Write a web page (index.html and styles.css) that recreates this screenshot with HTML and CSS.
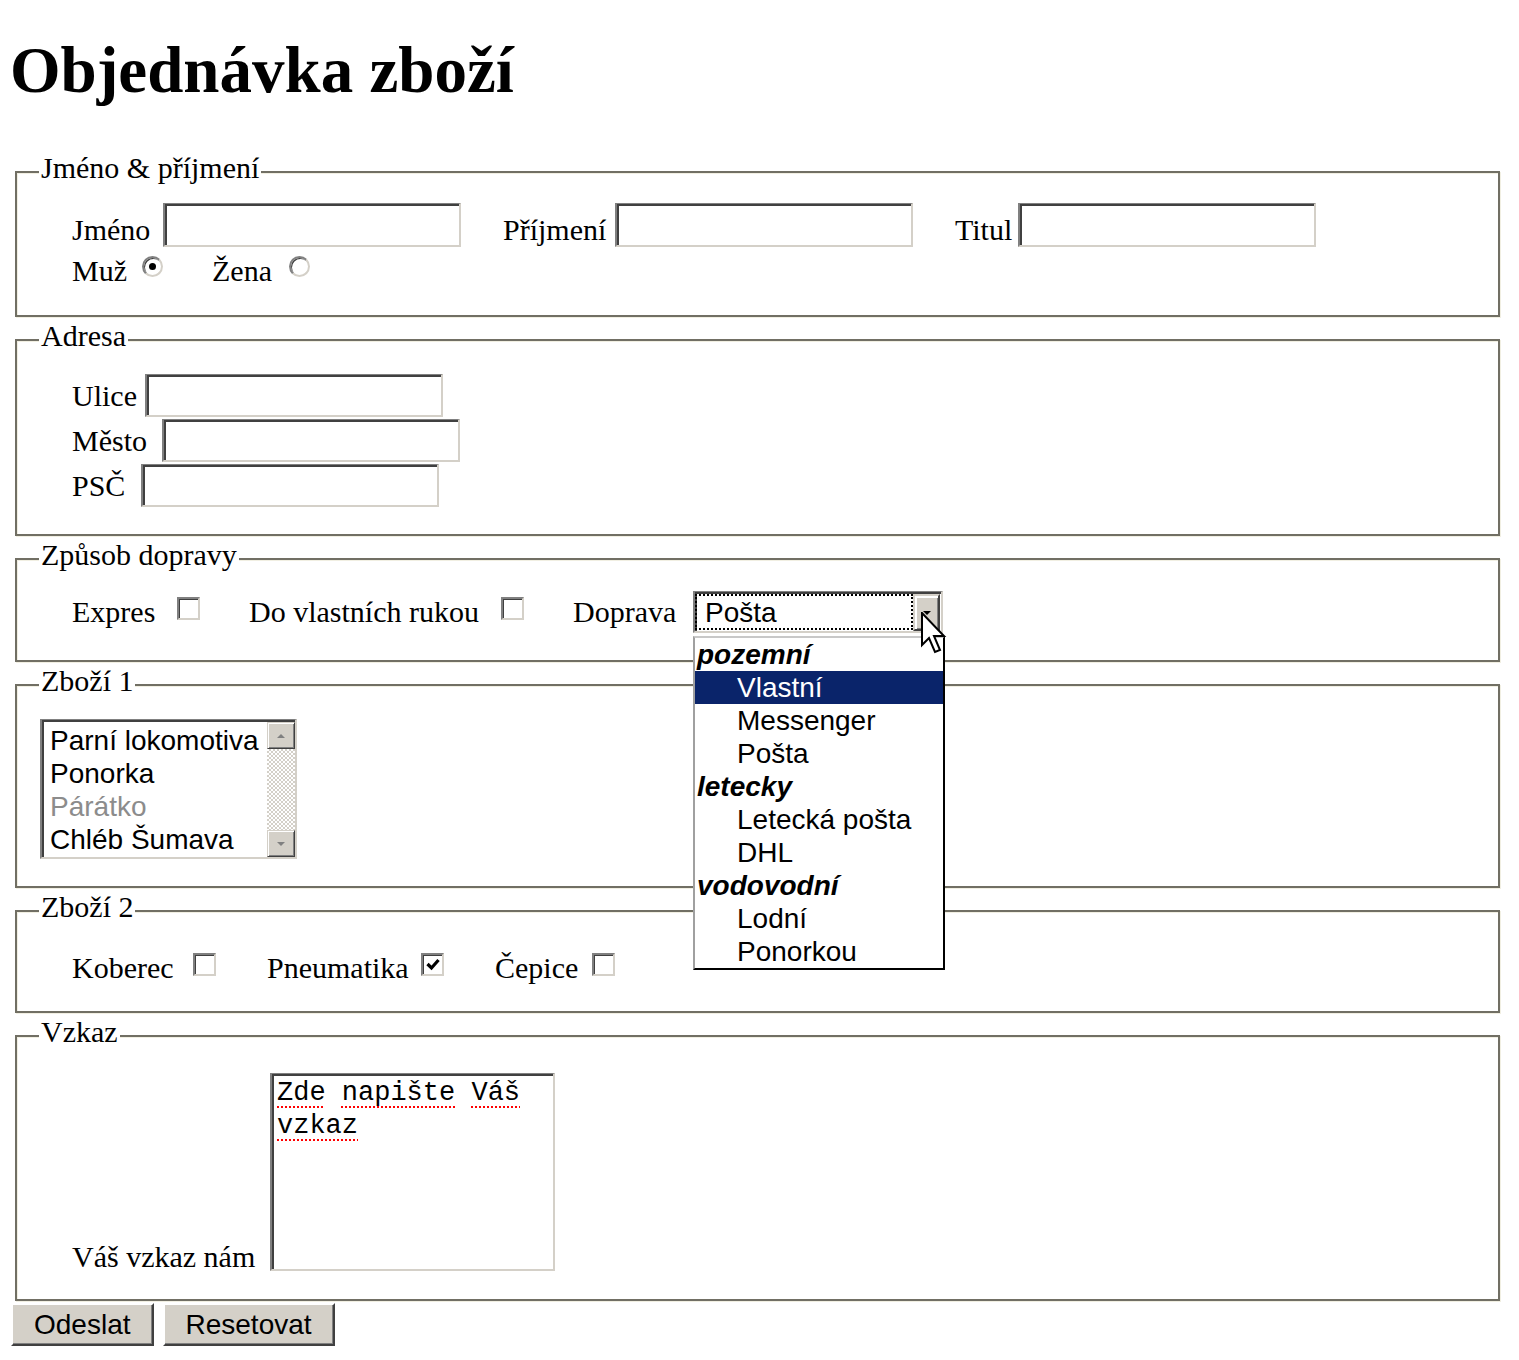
FILE: index.html
```html
<!DOCTYPE html>
<html lang="cs">
<head>
<meta charset="utf-8">
<title>Objednávka zboží</title>
<link rel="stylesheet" href="styles.css">
</head>
<body>
<h1 class="title">Objednávka zboží</h1>
<form class="order">
  <fieldset class="group group--name">
    <legend class="group__legend">Jméno &amp; příjmení</legend>
    <div class="grid grid--name">
      <label class="pair"><span class="lbl">Jméno</span><input class="text-input" type="text"></label>
      <label class="pair"><span class="lbl">Příjmení</span><input class="text-input" type="text"></label>
      <label class="pair"><span class="lbl">Titul</span><input class="text-input" type="text"></label>
    </div>
    <div class="grid grid--gender">
      <label class="pair pair--top"><span class="lbl">Muž</span><span class="radio radio--on"></span></label>
      <label class="pair pair--top"><span class="lbl">Žena</span><span class="radio"></span></label>
    </div>
  </fieldset>

  <fieldset class="group group--address">
    <legend class="group__legend">Adresa</legend>
    <label class="pair pair--addr pair--ulice"><span class="lbl lbl--lift">Ulice</span><input class="text-input text-input--short" type="text"></label>
    <label class="pair pair--addr pair--mesto"><span class="lbl lbl--lift">Město</span><input class="text-input text-input--short" type="text"></label>
    <label class="pair pair--addr pair--psc"><span class="lbl lbl--lift">PSČ</span><input class="text-input text-input--short" type="text"></label>
  </fieldset>

  <fieldset class="group group--transport">
    <legend class="group__legend">Způsob dopravy</legend>
    <div class="grid grid--transport">
      <label class="pair"><span class="lbl lbl--lift">Expres</span><span class="check check--mid"></span></label>
      <label class="pair"><span class="lbl lbl--lift">Do vlastních rukou</span><span class="check check--mid"></span></label>
      <div class="pair">
        <span class="lbl lbl--lift">Doprava</span>
        <div class="combo">
          <span class="combo__value">Pošta</span>
          <span class="combo__button">
            <svg class="combo__arrow" width="10" height="6" viewBox="0 0 10 6"><path d="M1 1h8L5 5z" fill="#000"/></svg>
          </span>
          <ul class="combo__list">
            <li class="combo__group">pozemní</li>
            <li class="combo__option is-selected">Vlastní</li>
            <li class="combo__option">Messenger</li>
            <li class="combo__option">Pošta</li>
            <li class="combo__group">letecky</li>
            <li class="combo__option">Letecká pošta</li>
            <li class="combo__option">DHL</li>
            <li class="combo__group">vodovodní</li>
            <li class="combo__option">Lodní</li>
            <li class="combo__option">Ponorkou</li>
          </ul>
          <svg class="cursor" width="26" height="44" viewBox="0 0 26 44"><path d="M1 1 L1 33 L8 26 L14 40 L19 38 L13 24 L23 24 Z" fill="#fff" stroke="#000" stroke-width="2" stroke-linejoin="miter"/></svg>
        </div>
      </div>
    </div>
  </fieldset>

  <fieldset class="group group--goods1">
    <legend class="group__legend">Zboží 1</legend>
    <div class="listbox">
      <ul class="listbox__items">
        <li>Parní lokomotiva</li>
        <li>Ponorka</li>
        <li class="is-disabled">Párátko</li>
        <li>Chléb Šumava</li>
      </ul>
      <div class="scrollbar">
        <span class="scrollbar__btn"><svg width="10" height="6" viewBox="0 0 10 6"><path d="M1 5h8L5 1z" fill="#808080"/></svg></span>
        <span class="scrollbar__track"></span>
        <span class="scrollbar__btn"><svg width="10" height="6" viewBox="0 0 10 6"><path d="M1 1h8L5 5z" fill="#808080"/></svg></span>
      </div>
    </div>
  </fieldset>

  <fieldset class="group group--goods2">
    <legend class="group__legend">Zboží 2</legend>
    <div class="grid grid--goods">
      <label class="pair pair--top"><span class="lbl">Koberec</span><span class="check check--top"></span></label>
      <label class="pair pair--top"><span class="lbl">Pneumatika</span><span class="check check--top check--on"><svg width="18" height="18" viewBox="0 0 18 18"><path d="M3.5 8 L7.5 12 L14.5 4" fill="none" stroke="#000" stroke-width="3.2"/></svg></span></label>
      <label class="pair pair--top"><span class="lbl">Čepice</span><span class="check check--top"></span></label>
    </div>
  </fieldset>

  <fieldset class="group group--message">
    <legend class="group__legend">Vzkaz</legend>
    <label class="pair pair--memo"><span class="lbl lbl--drop">Váš vzkaz nám</span><span class="memo" role="textbox" aria-multiline="true"><span class="typo">Zde</span> <span class="typo">napište</span> <span class="typo">Váš</span><br><span class="typo">vzkaz</span></span></label>
  </fieldset>

  <div class="actions">
    <button class="btn" type="submit">Odeslat</button>
    <button class="btn" type="reset">Resetovat</button>
  </div>
</form>
</body>
</html>
```

FILE: styles.css
```css
* { box-sizing: border-box; }

html, body {
  margin: 0;
  padding: 0;
  background: #fff;
}

body {
  padding: 0 12px;
  font-family: "Liberation Serif", "Times New Roman", serif;
  font-size: 30px;
  color: #000;
}

.title {
  margin: 34px 0 0 -2px;
  font: bold 65px/72px "Liberation Serif", "Times New Roman", serif;
}

.order {
  margin-top: 45px;
}

/* ---------- fieldsets ---------- */
.group {
  margin: 0 7px 2px 3px;
  padding: 0 0 27px 0;
  border: 2px solid #716f64;
  box-shadow: inset 1px 1px 0 #f1efe2, 1px 1px 0 #f1efe2;
  min-width: 0;
}

.group__legend {
  margin-left: 22px;
  padding: 0 2px 8px;
  font-size: 30px;
  line-height: 34px;
  background: #fff;
}

.group--transport { padding-bottom: 27px; }
.group--goods2 { padding-bottom: 26px; }
.group--message { padding-bottom: 28px; }

/* ---------- rows ---------- */
.grid {
  display: grid;
  margin-left: 55px;
}

.grid--name {
  margin-top: 10px;
  grid-template-columns: 389px 410px 361px;
  column-gap: 42px;
}

.grid--gender {
  margin-top: 7px;
  grid-template-columns: 91px 98px;
  column-gap: 49px;
}

.grid--transport {
  margin-top: 11px;
  grid-template-columns: 128px 275px 370px;
  column-gap: 49px;
}

.grid--goods {
  margin-top: 19px;
  grid-template-columns: 144px 177px 120px;
  column-gap: 51px;
}

.pair {
  display: flex;
  justify-content: space-between;
  align-items: flex-end;
}

.pair--top { align-items: flex-start; }

.pair--addr {
  margin-left: 55px;
  margin-top: 2px;
}
.pair--ulice { width: 371px; margin-top: 13px; }
.pair--mesto { width: 388px; }
.pair--psc { width: 367px; }

.pair--memo {
  width: 483px;
  margin-left: 55px;
  margin-top: 16px;
}

.lbl {
  line-height: 34px;
  white-space: nowrap;
}

.lbl--lift { margin-bottom: 4px; }
.lbl--drop { margin-bottom: -3px; }

/* ---------- text inputs ---------- */
.text-input {
  display: block;
  width: 298px;
  height: 44px;
  margin: 0;
  padding: 0 4px;
  border-style: solid;
  border-width: 1px 2px 2px 2px;
  border-color: #808080 #d4d0c8 #d4d0c8 #808080;
  box-shadow: inset 2px 2px 0 #404040;
  background: #fff;
  font: 28px "Liberation Sans", Arial, sans-serif;
  outline: none;
}

.text-input--short { height: 43px; }

/* ---------- radio / check ---------- */
.radio {
  position: relative;
  display: block;
  width: 21px;
  height: 21px;
  margin-top: 2px;
  border-radius: 50%;
  border: 2px solid;
  border-color: #808080 #d4d0c8 #d4d0c8 #808080;
  box-shadow: inset 1px 1px 0 #404040;
  background: #fff;
}

.radio--on::after {
  content: "";
  position: absolute;
  left: 5px;
  top: 5px;
  width: 7px;
  height: 7px;
  border-radius: 50%;
  background: #000;
}

.check {
  display: flex;
  align-items: center;
  justify-content: center;
  width: 23px;
  height: 23px;
  border-style: solid;
  border-width: 2px;
  border-color: #808080 #d4d0c8 #d4d0c8 #808080;
  box-shadow: inset 1px 1px 0 #404040;
  background: #fff;
}

.check--mid { margin-bottom: 13px; }
.check--top { margin-top: 2px; }

/* ---------- combo box ---------- */
.combo {
  position: relative;
  display: flex;
  width: 250px;
  height: 42px;
  padding: 1px 1px 1px 0;
  border-style: solid;
  border-width: 1px 2px 2px 2px;
  border-color: #808080 #d4d0c8 #d4d0c8 #808080;
  box-shadow: inset 2px 2px 0 #404040;
  background: #fff;
}

.combo__value {
  flex: 1;
  margin: 1px 0 0 0;
  padding-left: 8px;
  border: 2px dotted #000;
  font: 28px/33px "Liberation Sans", Arial, sans-serif;
}

.combo__button {
  display: flex;
  align-items: center;
  justify-content: center;
  width: 27px;
  height: 37px;
  margin-top: 1px;
  background: #d4d0c8;
  border: 2px solid;
  border-color: #d4d0c8 #404040 #404040 #d4d0c8;
  box-shadow: inset 2px 2px 0 #fff, inset -1px -1px 0 #808080;
}

.combo__list {
  position: absolute;
  left: -2px;
  top: 44px;
  z-index: 5;
  width: 252px;
  margin: 0;
  padding: 0;
  list-style: none;
  background: #fff;
  border: 2px solid;
  border-color: #c8c8c8 #000 #000 #a0a0a0;
  font: 28px/33px "Liberation Sans", Arial, sans-serif;
}

.combo__group {
  height: 33px;
  padding-left: 2px;
  font-weight: bold;
  font-style: italic;
}

.combo__option {
  height: 33px;
  padding-left: 42px;
}

.combo__option.is-selected {
  background: #0a246a;
  color: #fff;
}

.cursor {
  position: absolute;
  left: 226px;
  top: 20px;
  z-index: 6;
}

/* ---------- list box ---------- */
.listbox {
  display: flex;
  width: 257px;
  height: 140px;
  margin: 13px 0 0 23px;
  border-style: solid;
  border-width: 1px 2px 2px 2px;
  border-color: #808080 #d4d0c8 #d4d0c8 #808080;
  box-shadow: inset 2px 2px 0 #404040;
  background: #fff;
}

.listbox__items {
  flex: 1;
  margin: 0;
  padding: 4px 0 0 8px;
  list-style: none;
  font: 28px/33px "Liberation Sans", Arial, sans-serif;
  white-space: nowrap;
  overflow: hidden;
}

.listbox__items .is-disabled { color: #8c8c8c; }

.scrollbar {
  display: flex;
  flex-direction: column;
  width: 28px;
  margin: 2px 0 0 0;
}

.scrollbar__btn {
  display: flex;
  align-items: center;
  justify-content: center;
  height: 27px;
  background: #d4d0c8;
  border: 1px solid;
  border-color: #d4d0c8 #404040 #404040 #d4d0c8;
  box-shadow: inset 1px 1px 0 #fff, inset -1px -1px 0 #808080;
}

.scrollbar__track {
  flex: 1;
  background: repeating-conic-gradient(#d4d0c8 0 25%, #fff 0 50%) 0 0 / 4px 4px;
}

/* ---------- memo ---------- */
.memo {
  display: block;
  width: 285px;
  height: 198px;
  padding: 3px 0 0 5px;
  border-style: solid;
  border-width: 1px 2px 2px 2px;
  border-color: #808080 #d4d0c8 #d4d0c8 #808080;
  box-shadow: inset 2px 2px 0 #404040;
  background: #fff;
  font: 27px/33px "Liberation Mono", "Courier New", monospace;
}

.typo {
  text-decoration: underline dotted #f00;
  text-decoration-thickness: 2px;
  text-underline-offset: 6px;
}

/* ---------- buttons ---------- */
.actions {
  display: flex;
  gap: 9px;
  margin: 2px 0 0 -1px;
}

.btn {
  height: 43px;
  margin: 0;
  padding: 0 21px;
  background: #d4d0c8;
  border: 2px solid;
  border-color: #fff #404040 #404040 #fff;
  box-shadow: inset -1px -1px 0 #808080;
  font: 28px/1 "Liberation Sans", Arial, sans-serif;
  color: #000;
}
```
